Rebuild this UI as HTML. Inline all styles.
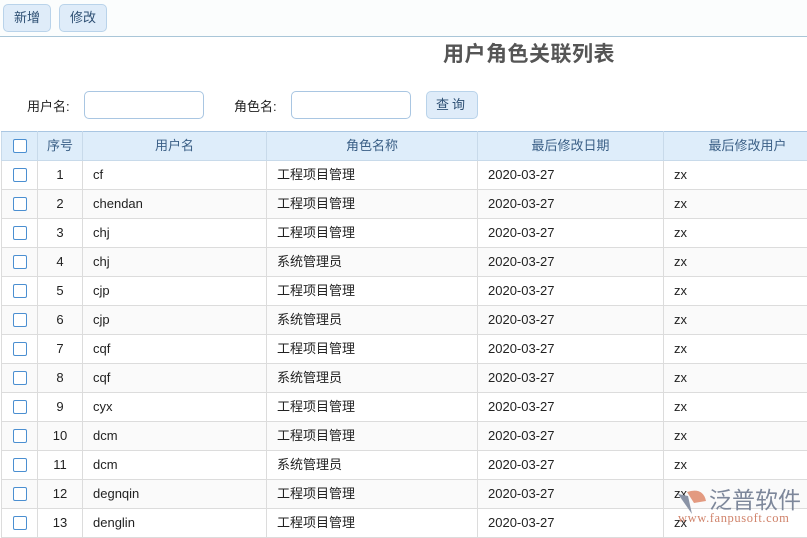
<!DOCTYPE html>
<html><head><meta charset="utf-8"><style>
*{box-sizing:border-box;margin:0;padding:0}
body{width:807px;height:534px;overflow:hidden;background:#fff;font-family:"Liberation Sans","Noto Sans CJK SC",sans-serif;font-size:13px;color:#222;position:relative}
.top{position:absolute;left:0;top:0;width:807px;height:37px;background:#fbfdfd;border-bottom:1px solid #a9c6d8}
.btn{position:absolute;top:4px;height:28px;border:1px solid #b9d3ea;border-radius:5px;background:#dfecf9;color:#2d4f73;font-size:13px;line-height:26px;text-align:center}
h1{position:absolute;left:443px;top:41px;font-size:21px;font-weight:bold;color:#555;letter-spacing:0.5px;line-height:28px}
.lbl{position:absolute;top:96px;font-size:13px;color:#222}
.inp{position:absolute;top:91px;height:28px;width:120px;border:1px solid #a9c6e2;border-radius:5px;background:#fff}
table{position:absolute;left:1px;top:131px;border-collapse:collapse;table-layout:fixed;width:830px}
th,td{border:1px solid #dcdcdc;height:29px;padding:0 10px;white-space:nowrap;overflow:hidden;line-height:14px;vertical-align:middle}
th{background:#deedfa;color:#3a5f86;font-weight:normal;border-color:#c8daea;border-top:1px solid #a9c6e2}
tr:nth-child(odd) td{background:#fafafa}
td.c,th.c{text-align:center;padding:0}
.cb{display:inline-block;width:14px;height:14px;border:1px solid #4b8fd1;border-radius:2px;background:#fff;vertical-align:middle}
</style></head><body>
<div class="top">
<div class="btn" style="left:3px;width:48px">新增</div>
<div class="btn" style="left:59px;width:48px">修改</div>
</div>
<h1>用户角色关联列表</h1>
<div class="lbl" style="left:27px">用户名:</div>
<div class="inp" style="left:84px"></div>
<div class="lbl" style="left:234px">角色名:</div>
<div class="inp" style="left:291px"></div>
<div class="btn" style="left:426px;top:91px;width:52px;height:28px;letter-spacing:3px">查询</div>
<table>
<colgroup><col style="width:36px"><col style="width:45px"><col style="width:184px"><col style="width:211px"><col style="width:186px"><col style="width:168px"></colgroup>
<tr><th class="c"><span class="cb"></span></th><th class="c">序号</th><th>用户名</th><th>角色名称</th><th>最后修改日期</th><th>最后修改用户</th></tr>
<tr><td class="c"><span class="cb"></span></td><td class="c">1</td><td>cf</td><td>工程项目管理</td><td>2020-03-27</td><td>zx</td></tr>
<tr><td class="c"><span class="cb"></span></td><td class="c">2</td><td>chendan</td><td>工程项目管理</td><td>2020-03-27</td><td>zx</td></tr>
<tr><td class="c"><span class="cb"></span></td><td class="c">3</td><td>chj</td><td>工程项目管理</td><td>2020-03-27</td><td>zx</td></tr>
<tr><td class="c"><span class="cb"></span></td><td class="c">4</td><td>chj</td><td>系统管理员</td><td>2020-03-27</td><td>zx</td></tr>
<tr><td class="c"><span class="cb"></span></td><td class="c">5</td><td>cjp</td><td>工程项目管理</td><td>2020-03-27</td><td>zx</td></tr>
<tr><td class="c"><span class="cb"></span></td><td class="c">6</td><td>cjp</td><td>系统管理员</td><td>2020-03-27</td><td>zx</td></tr>
<tr><td class="c"><span class="cb"></span></td><td class="c">7</td><td>cqf</td><td>工程项目管理</td><td>2020-03-27</td><td>zx</td></tr>
<tr><td class="c"><span class="cb"></span></td><td class="c">8</td><td>cqf</td><td>系统管理员</td><td>2020-03-27</td><td>zx</td></tr>
<tr><td class="c"><span class="cb"></span></td><td class="c">9</td><td>cyx</td><td>工程项目管理</td><td>2020-03-27</td><td>zx</td></tr>
<tr><td class="c"><span class="cb"></span></td><td class="c">10</td><td>dcm</td><td>工程项目管理</td><td>2020-03-27</td><td>zx</td></tr>
<tr><td class="c"><span class="cb"></span></td><td class="c">11</td><td>dcm</td><td>系统管理员</td><td>2020-03-27</td><td>zx</td></tr>
<tr><td class="c"><span class="cb"></span></td><td class="c">12</td><td>degnqin</td><td>工程项目管理</td><td>2020-03-27</td><td>zx</td></tr>
<tr><td class="c"><span class="cb"></span></td><td class="c">13</td><td>denglin</td><td>工程项目管理</td><td>2020-03-27</td><td>zx</td></tr>
</table>
<div style="position:absolute;left:676px;top:486px;width:131px;height:44px">
<svg width="32" height="28" style="position:absolute;left:0;top:2px" viewBox="0 0 32 28"><path d="M2 6 L16 26 L12 8 Z" fill="#8a93a6"/><path d="M11 4 Q27 -1 30 13 L18 15 Z" fill="#e39a80"/></svg>
<div style="position:absolute;left:33px;top:-2px;font-size:23px;line-height:28px;color:#7d879a;letter-spacing:0px;font-family:'Noto Sans CJK SC',sans-serif">泛普软件</div>
<div style="position:absolute;left:2px;top:25px;font-size:12.5px;line-height:14px;color:#d0836b;font-family:'Liberation Serif',serif;letter-spacing:0.6px">www.fanpusoft.com</div>
</div>
</body></html>
